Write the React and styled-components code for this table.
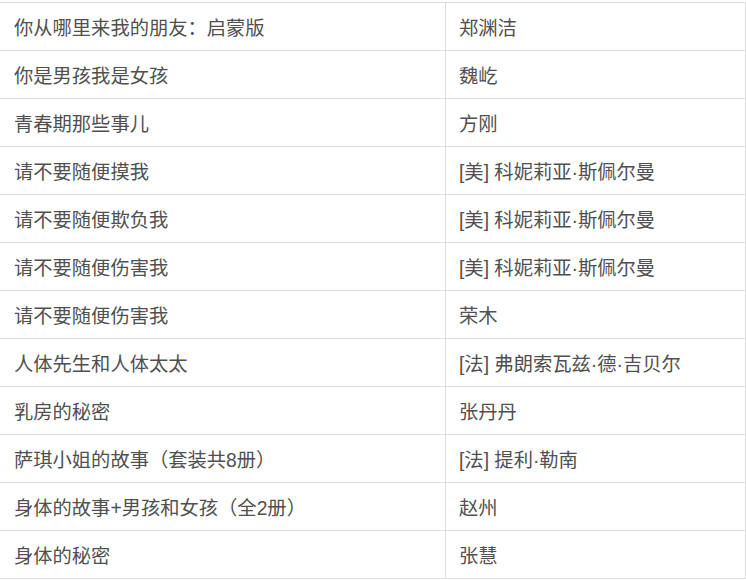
import React from "react";
import styled, { createGlobalStyle } from "styled-components";

const Global = createGlobalStyle`
  html, body { margin: 0; padding: 0; background: #fff; }
  body { font-family: "Liberation Sans", "Noto Sans CJK SC", sans-serif; }
`;

const Table = styled.table`
  margin-top: 2px;
  width: 746px;
  border-collapse: separate;
  border-spacing: 0;
  border-top: 1px solid #dddddd;
  table-layout: fixed;
`;

const Cell = styled.td`
  box-sizing: border-box;
  width: ${(p) => (p.$first ? "446px" : "300px")};
  height: 48px;
  padding: 4px ${(p) => (p.$first ? "14px" : "13px")} 0;
  border-bottom: 1px solid #dddddd;
  border-right: 1px solid #dddddd;
  font-family: "Liberation Sans", "Noto Sans CJK SC", sans-serif;
  font-size: 19.3px;
  color: #505050;
  line-height: 24px;
  vertical-align: middle;
  white-space: nowrap;
`;

const rows = [
  ["你从哪里来我的朋友：启蒙版", "郑渊洁"],
  ["你是男孩我是女孩", "魏屹"],
  ["青春期那些事儿", "方刚"],
  ["请不要随便摸我", "[美] 科妮莉亚·斯佩尔曼"],
  ["请不要随便欺负我", "[美] 科妮莉亚·斯佩尔曼"],
  ["请不要随便伤害我", "[美] 科妮莉亚·斯佩尔曼"],
  ["请不要随便伤害我", "荣木"],
  ["人体先生和人体太太", "[法] 弗朗索瓦兹·德·吉贝尔"],
  ["乳房的秘密", "张丹丹"],
  ["萨琪小姐的故事（套装共8册）", "[法] 提利·勒南"],
  ["身体的故事+男孩和女孩（全2册）", "赵州"],
  ["身体的秘密", "张慧"],
];

export default function App() {
  return (
    <>
      <Global />
      <Table>
        <tbody>
          {rows.map(([title, author], i) => (
            <tr key={i}>
              <Cell $first>{title}</Cell>
              <Cell>{author}</Cell>
            </tr>
          ))}
        </tbody>
      </Table>
    </>
  );
}
